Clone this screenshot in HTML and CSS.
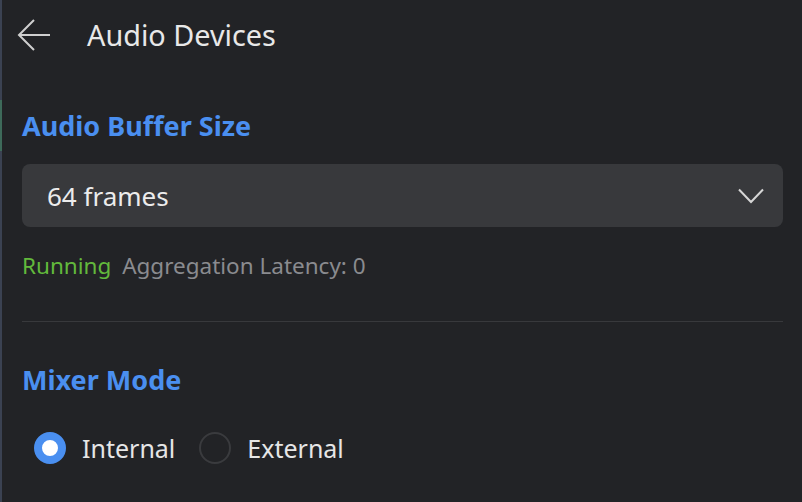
FILE: index.html
```html
<!DOCTYPE html>
<html>
<head>
<meta charset="utf-8">
<link rel="stylesheet" href="styles.css">
</head>
<body>
<div class="edge"></div>
<main class="page">
  <header class="header">
    <button class="back" aria-label="Back">
      <svg width="34" height="32" viewBox="0 0 34 32"><path d="M18 1 L3 16 L18 31 M3 16 H34" fill="none" stroke="#cfcfcf" stroke-width="2"/></svg>
    </button>
    <h1 class="title">Audio Devices</h1>
  </header>

  <section class="section">
    <h2 class="section-title">Audio Buffer Size</h2>
    <div class="select">
      <span class="select-value">64 frames</span>
      <svg class="chevron" width="26" height="16" viewBox="0 0 26 16"><path d="M1 1.5 L13 14 L25 1.5" fill="none" stroke="#d6d6d6" stroke-width="2"/></svg>
    </div>
    <p class="status"><span class="running">Running</span> <span class="latency">Aggregation Latency: 0</span></p>
  </section>

  <hr class="divider">

  <section class="section mixer">
    <h2 class="section-title">Mixer Mode</h2>
    <div class="radios">
      <label class="radio"><span class="dot checked"></span><span class="radio-label">Internal</span></label>
      <label class="radio"><span class="dot"></span><span class="radio-label">External</span></label>
    </div>
  </section>
</main>
</body>
</html>
```

FILE: styles.css
```css
html, body {
  margin: 0;
  height: 100%;
}
body {
  background: #222326;
  font-family: "Noto Sans", "Open Sans", sans-serif;
  color: #e6e6e6;
  display: flex;
  overflow: hidden;
}
.edge {
  width: 2px;
  flex: none;
  background: linear-gradient(#3b4252 0 20%, #3e6a5a 20% 30%, #3b4252 30% 100%);
}
.page {
  flex: 1;
  padding: 0 19px 0 20px;
}
.header {
  display: flex;
  align-items: center;
  height: 70px;
}
.back {
  background: none;
  border: 0;
  padding: 0;
  margin-left: -6px;
  width: 34px;
  height: 32px;
  display: flex;
  align-items: center;
}
.title {
  margin: 0 0 0 37px;
  font-size: 28.8px;
  line-height: 34px;
  font-weight: 400;
  color: #e8e8e8;
}
.section-title {
  margin: 0;
  font-size: 27px;
  line-height: 32px;
  font-weight: 700;
  color: #4a8ff0;
}
.section {
  padding-top: 40px;
}
.select {
  margin-top: 22px;
  height: 63px;
  background: #38393c;
  border-radius: 8px;
  display: flex;
  align-items: center;
  justify-content: space-between;
  padding: 0 19px 0 25px;
}
.select-value {
  font-size: 26px;
  color: #ececec;
}
.status {
  margin: 25px 0 0;
  font-size: 22.5px;
  line-height: 28px;
}
.running {
  color: #62b93c;
}
.latency {
  margin-left: 5px;
  color: #8a8b8f;
}
.divider {
  border: 0;
  border-top: 1px solid #38393c;
  margin: 41px 0 0;
}
.mixer {
  padding-top: 42px;
}
.radios {
  display: flex;
  align-items: center;
  margin: 36px 0 0 12px;
  gap: 24px;
}
.radio {
  display: flex;
  align-items: center;
  gap: 16px;
}
.dot {
  width: 32px;
  height: 32px;
  border-radius: 50%;
  box-sizing: border-box;
  border: 2px solid #3a3b3e;
}
.dot.checked {
  border: 8px solid #4a8ff0;
  background: #ffffff;
}
.radio-label {
  font-size: 25px;
  line-height: 32px;
  color: #e6e6e6;
}
```
